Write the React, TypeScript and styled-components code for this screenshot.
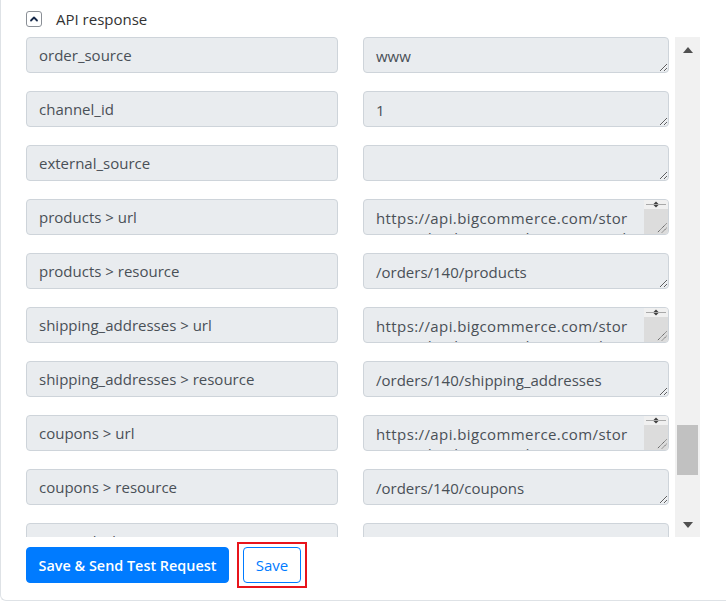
import React, { useLayoutEffect, useRef } from "react";
import styled, { createGlobalStyle, css } from "styled-components";

const GlobalStyle = createGlobalStyle`
    body{
        margin:0;
        background:#fff;
        font-family:"Open Sans","Noto Sans",sans-serif;
    }
`

const stripSvg = `url("data:image/svg+xml;utf8,<svg xmlns='http://www.w3.org/2000/svg' width='24' height='34'><rect width='24' height='34' fill='%23dcdcdc'/><rect width='24' height='9' fill='%23f0f0f0'/><path d='M2 4.5H22' stroke='%23a8a8a8' stroke-width='1'/><path d='M9.5 4L12 1.5L14.5 4ZM9.5 5L12 7.5L14.5 5Z' fill='%23404040'/><path d='M22.5 23.5L13.5 32.5M22.5 28L18 32.5' stroke='%23555' stroke-width='1' stroke-dasharray='1.2 0.6'/></svg>")`

const Card = styled.div`
    height:600px;
    border-left:1px solid #dee2e6;
    border-bottom:1px solid #dee2e6;
    border-bottom-left-radius:6px;
    display:flex;
    flex-direction:column;
`

const Header = styled.div`
    height:37px;
    display:flex;
    align-items:center;
    gap:14px;
    padding-left:25px;
    font-size:15px;
    color:#333;
`

const Toggle = styled.span`
    width:16px;
    height:16px;
    box-sizing:border-box;
    border:1px solid #8a8f96;
    border-radius:3px;
    display:flex;
    align-items:center;
    justify-content:center;
`

const ScrollRow = styled.div`
    display:flex;
    gap:6px;
    margin-left:25px;
    height:500px;
`

const ListView = styled.div`
    width:643px;
    height:500px;
    overflow:hidden;
    position:relative;
`

const Scrollbar = styled.div`
    width:25px;
    background:#f1f1f1;
    display:flex;
    flex-direction:column;
`

const ArrowButton = styled.div<{ $down?: boolean }>`
    height:25px;
    display:flex;
    align-items:center;
    justify-content:center;
    &::before{
        content:"";
        border-left:5.5px solid transparent;
        border-right:5.5px solid transparent;
        ${p => p.$down
        ? css`border-top:6px solid #505050;`
        : css`border-bottom:6px solid #505050;`}
    }
`

const Track = styled.div`
    flex:1;
`

const Thumb = styled.div<{ $top: number; $size: number }>`
    margin:${p => p.$top}px 2px 0;
    height:${p => p.$size}px;
    background:#c1c1c1;
`

const Grid = styled.div`
    display:grid;
    grid-template-columns:312px 306px;
    column-gap:25px;
    row-gap:18px;
`

const KeyField = styled.div`
    height:36px;
    box-sizing:border-box;
    background:#e9ecef;
    border:1px solid #ced4da;
    border-radius:4px;
    padding:0 12px;
    display:flex;
    align-items:center;
    font-size:15px;
    color:#495057;
    white-space:nowrap;
    overflow:hidden;
`

const ValueBox = styled.div<{ $scroll: boolean }>`
    position:relative;
    height:36px;
    ${p => p.$scroll && css`
        &::after{
            content:"";
            position:absolute;
            top:1px;
            right:1px;
            bottom:1px;
            width:24px;
            border-radius:0 3px 3px 0;
            background:${stripSvg} no-repeat;
            pointer-events:none;
        }
    `}
`

const ValueField = styled.textarea<{ $scroll: boolean }>`
    height:36px;
    width:306px;
    box-sizing:border-box;
    background:#e9ecef;
    border:1px solid #ced4da;
    border-radius:4px;
    padding:8px ${p => p.$scroll ? 37 : 12}px 6px 12px;
    margin:0;
    font-family:"Open Sans","Noto Sans",sans-serif;
    font-size:15px;
    line-height:20px;
    letter-spacing:${p => p.$scroll ? 0.4 : 0}px;
    color:#495057;
    resize:vertical;
    overflow:hidden;
    word-break:break-all;
    display:block;
`

const Footer = styled.div`
    display:flex;
    align-items:center;
    gap:8px;
    padding:5px 0 0 25px;
`

const PrimaryButton = styled.button`
    height:36px;
    width:203px;
    background:#007bff;
    border:1px solid #007bff;
    border-radius:4px;
    color:#fff;
    font-family:"Open Sans","Noto Sans",sans-serif;
    font-size:14.4px;
    font-weight:600;
    padding:0;
`

const Highlight = styled.span`
    display:flex;
    border:2px solid #e8141b;
    padding:3px 4px;
`

const OutlineButton = styled.button`
    height:36px;
    width:58px;
    background:#fff;
    border:1px solid #007bff;
    border-radius:4px;
    color:#007bff;
    font-family:"Open Sans","Noto Sans",sans-serif;
    font-size:15px;
    padding:0;
`

const before = [
    'id', 'customer_id', 'date_created', 'date_modified', 'date_shipped', 'status_id', 'status',
    'subtotal_ex_tax', 'subtotal_inc_tax', 'subtotal_tax', 'base_shipping_cost', 'shipping_cost_ex_tax',
    'shipping_cost_inc_tax', 'shipping_cost_tax', 'shipping_cost_tax_class_id', 'base_handling_cost',
    'handling_cost_ex_tax', 'handling_cost_inc_tax', 'handling_cost_tax', 'handling_cost_tax_class_id',
    'base_wrapping_cost', 'wrapping_cost_ex_tax', 'wrapping_cost_inc_tax', 'wrapping_cost_tax',
    'wrapping_cost_tax_class_id', 'total_ex_tax', 'total_inc_tax', 'total_tax', 'items_total',
    'items_shipped', 'payment_method', 'payment_provider_id', 'payment_status', 'refunded_amount',
    'order_is_digital', 'store_credit_amount', 'gift_certificate_amount', 'ip_address', 'ip_address_v6',
    'geoip_country', 'geoip_country_iso2', 'currency_id', 'currency_code', 'currency_exchange_rate',
    'default_currency_id', 'default_currency_code', 'staff_notes', 'customer_message', 'discount_amount',
    'coupon_discount', 'shipping_address_count', 'is_deleted', 'ebay_order_id', 'cart_id',
    'billing_address > first_name', 'billing_address > last_name', 'billing_address > company',
    'billing_address > street_1', 'billing_address > street_2', 'billing_address > city',
    'billing_address > state', 'billing_address > zip', 'billing_address > country',
    'billing_address > country_iso2', 'billing_address > phone', 'billing_address > email',
    'is_email_opt_in', 'credit_card_type',
].map(k => [k, ''])

const shown = [
    ['order_source', 'www'],
    ['channel_id', '1'],
    ['external_source', ''],
    ['products > url', 'https://api.bigcommerce.com/stores/e7rd5j8l0x/v2/orders/140/products'],
    ['products > resource', '/orders/140/products'],
    ['shipping_addresses > url', 'https://api.bigcommerce.com/stores/e7rd5j8l0x/v2/orders/140/shipping_addresses'],
    ['shipping_addresses > resource', '/orders/140/shipping_addresses'],
    ['coupons > url', 'https://api.bigcommerce.com/stores/e7rd5j8l0x/v2/orders/140/coupons'],
    ['coupons > resource', '/orders/140/coupons'],
]

const after = [
    'external_id', 'external_merchant_id', 'tax_provider_id', 'customer_locale', 'external_order_id',
    'store_default_currency_code', 'store_default_to_transactional_exchange_rate', 'custom_status',
].map(k => [k, ''])

const rows = [...before, ...shown, ...after]

const App: React.FC = () => {
    const boxRef = useRef<HTMLDivElement>(null)
    const startRef = useRef<HTMLDivElement>(null)

    useLayoutEffect(() => {
        if (boxRef.current && startRef.current) {
            boxRef.current.scrollTop = startRef.current.offsetTop
        }
    }, [])

    return <Card>
        <GlobalStyle />
        <Header>
            <Toggle>
                <svg width="10" height="10" viewBox="0 0 10 10">
                    <path d="M2 6.5L5 3.5L8 6.5" fill="none" stroke="#16294a" strokeWidth="1.8" strokeLinecap="round" strokeLinejoin="round" />
                </svg>
            </Toggle>
            <span>API response</span>
        </Header>
        <ScrollRow>
            <ListView ref={boxRef}>
                <Grid>
                    {rows.map(([k, v], i) => {
                        const long = v.length > 32
                        return <React.Fragment key={i}>
                            <KeyField ref={i === before.length ? startRef : undefined}>{k}</KeyField>
                            <ValueBox $scroll={long}>
                                <ValueField $scroll={long} readOnly defaultValue={v} />
                            </ValueBox>
                        </React.Fragment>
                    })}
                </Grid>
            </ListView>
            <Scrollbar>
                <ArrowButton />
                <Track>
                    <Thumb $top={363} $size={50} />
                </Track>
                <ArrowButton $down />
            </Scrollbar>
        </ScrollRow>
        <Footer>
            <PrimaryButton>Save &amp; Send Test Request</PrimaryButton>
            <Highlight>
                <OutlineButton>Save</OutlineButton>
            </Highlight>
        </Footer>
    </Card>
}

export default App;
